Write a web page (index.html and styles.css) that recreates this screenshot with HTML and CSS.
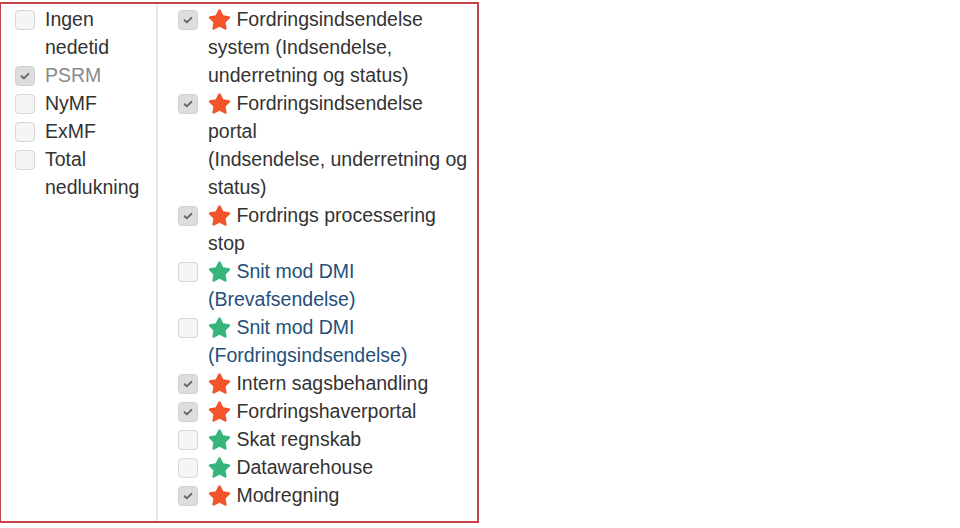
FILE: index.html
```html
<!DOCTYPE html>
<html>
<head>
<meta charset="utf-8">
<link rel="stylesheet" href="styles.css">
</head>
<body>
<div class="panel">
  <div class="col-left">
    <div class="item"><span class="cb"></span><span class="txt">Ingen nedetid</span></div>
    <div class="item"><span class="cb on"><svg viewBox="0 0 12 12"><path d="M2.6 6.2l2.3 2.2 4.5-4.6" /></svg></span><span class="txt muted">PSRM</span></div>
    <div class="item"><span class="cb"></span><span class="txt">NyMF</span></div>
    <div class="item"><span class="cb"></span><span class="txt">ExMF</span></div>
    <div class="item"><span class="cb"></span><span class="txt">Total nedlukning</span></div>
  </div>
  <div class="col-right">
    <div class="item"><span class="cb on"><svg viewBox="0 0 12 12"><path d="M2.6 6.2l2.3 2.2 4.5-4.6" /></svg></span><span class="txt"><svg class="star red" viewBox="0 0 576 512"><path d="M259.3 17.8L194 150.2 47.9 171.5c-26.2 3.8-36.7 36.1-17.7 54.6l105.7 103-25 145.5c-4.5 26.3 23.2 46 46.4 33.7L288 439.6l130.7 68.7c23.2 12.2 50.9-7.4 46.4-33.7l-25-145.5 105.7-103c19-18.5 8.5-50.8-17.7-54.6L382 150.2 316.7 17.8c-11.7-23.6-45.6-23.9-57.4 0z"/></svg> Fordringsindsendelse system (Indsendelse, underretning og status)</span></div>
    <div class="item"><span class="cb on"><svg viewBox="0 0 12 12"><path d="M2.6 6.2l2.3 2.2 4.5-4.6" /></svg></span><span class="txt"><svg class="star red" viewBox="0 0 576 512"><path d="M259.3 17.8L194 150.2 47.9 171.5c-26.2 3.8-36.7 36.1-17.7 54.6l105.7 103-25 145.5c-4.5 26.3 23.2 46 46.4 33.7L288 439.6l130.7 68.7c23.2 12.2 50.9-7.4 46.4-33.7l-25-145.5 105.7-103c19-18.5 8.5-50.8-17.7-54.6L382 150.2 316.7 17.8c-11.7-23.6-45.6-23.9-57.4 0z"/></svg> Fordringsindsendelse portal<br>(Indsendelse, underretning og status)</span></div>
    <div class="item"><span class="cb on"><svg viewBox="0 0 12 12"><path d="M2.6 6.2l2.3 2.2 4.5-4.6" /></svg></span><span class="txt"><svg class="star red" viewBox="0 0 576 512"><path d="M259.3 17.8L194 150.2 47.9 171.5c-26.2 3.8-36.7 36.1-17.7 54.6l105.7 103-25 145.5c-4.5 26.3 23.2 46 46.4 33.7L288 439.6l130.7 68.7c23.2 12.2 50.9-7.4 46.4-33.7l-25-145.5 105.7-103c19-18.5 8.5-50.8-17.7-54.6L382 150.2 316.7 17.8c-11.7-23.6-45.6-23.9-57.4 0z"/></svg> Fordrings processering stop</span></div>
    <div class="item"><span class="cb"></span><span class="txt link"><svg class="star green" viewBox="0 0 576 512"><path d="M259.3 17.8L194 150.2 47.9 171.5c-26.2 3.8-36.7 36.1-17.7 54.6l105.7 103-25 145.5c-4.5 26.3 23.2 46 46.4 33.7L288 439.6l130.7 68.7c23.2 12.2 50.9-7.4 46.4-33.7l-25-145.5 105.7-103c19-18.5 8.5-50.8-17.7-54.6L382 150.2 316.7 17.8c-11.7-23.6-45.6-23.9-57.4 0z"/></svg> Snit mod DMI (Brevafsendelse)</span></div>
    <div class="item"><span class="cb"></span><span class="txt link"><svg class="star green" viewBox="0 0 576 512"><path d="M259.3 17.8L194 150.2 47.9 171.5c-26.2 3.8-36.7 36.1-17.7 54.6l105.7 103-25 145.5c-4.5 26.3 23.2 46 46.4 33.7L288 439.6l130.7 68.7c23.2 12.2 50.9-7.4 46.4-33.7l-25-145.5 105.7-103c19-18.5 8.5-50.8-17.7-54.6L382 150.2 316.7 17.8c-11.7-23.6-45.6-23.9-57.4 0z"/></svg> Snit mod DMI (Fordringsindsendelse)</span></div>
    <div class="item"><span class="cb on"><svg viewBox="0 0 12 12"><path d="M2.6 6.2l2.3 2.2 4.5-4.6" /></svg></span><span class="txt"><svg class="star red" viewBox="0 0 576 512"><path d="M259.3 17.8L194 150.2 47.9 171.5c-26.2 3.8-36.7 36.1-17.7 54.6l105.7 103-25 145.5c-4.5 26.3 23.2 46 46.4 33.7L288 439.6l130.7 68.7c23.2 12.2 50.9-7.4 46.4-33.7l-25-145.5 105.7-103c19-18.5 8.5-50.8-17.7-54.6L382 150.2 316.7 17.8c-11.7-23.6-45.6-23.9-57.4 0z"/></svg> Intern sagsbehandling</span></div>
    <div class="item"><span class="cb on"><svg viewBox="0 0 12 12"><path d="M2.6 6.2l2.3 2.2 4.5-4.6" /></svg></span><span class="txt"><svg class="star red" viewBox="0 0 576 512"><path d="M259.3 17.8L194 150.2 47.9 171.5c-26.2 3.8-36.7 36.1-17.7 54.6l105.7 103-25 145.5c-4.5 26.3 23.2 46 46.4 33.7L288 439.6l130.7 68.7c23.2 12.2 50.9-7.4 46.4-33.7l-25-145.5 105.7-103c19-18.5 8.5-50.8-17.7-54.6L382 150.2 316.7 17.8c-11.7-23.6-45.6-23.9-57.4 0z"/></svg> Fordringshaverportal</span></div>
    <div class="item"><span class="cb"></span><span class="txt"><svg class="star green" viewBox="0 0 576 512"><path d="M259.3 17.8L194 150.2 47.9 171.5c-26.2 3.8-36.7 36.1-17.7 54.6l105.7 103-25 145.5c-4.5 26.3 23.2 46 46.4 33.7L288 439.6l130.7 68.7c23.2 12.2 50.9-7.4 46.4-33.7l-25-145.5 105.7-103c19-18.5 8.5-50.8-17.7-54.6L382 150.2 316.7 17.8c-11.7-23.6-45.6-23.9-57.4 0z"/></svg> Skat regnskab</span></div>
    <div class="item"><span class="cb"></span><span class="txt"><svg class="star green" viewBox="0 0 576 512"><path d="M259.3 17.8L194 150.2 47.9 171.5c-26.2 3.8-36.7 36.1-17.7 54.6l105.7 103-25 145.5c-4.5 26.3 23.2 46 46.4 33.7L288 439.6l130.7 68.7c23.2 12.2 50.9-7.4 46.4-33.7l-25-145.5 105.7-103c19-18.5 8.5-50.8-17.7-54.6L382 150.2 316.7 17.8c-11.7-23.6-45.6-23.9-57.4 0z"/></svg> Datawarehouse</span></div>
    <div class="item"><span class="cb on"><svg viewBox="0 0 12 12"><path d="M2.6 6.2l2.3 2.2 4.5-4.6" /></svg></span><span class="txt"><svg class="star red" viewBox="0 0 576 512"><path d="M259.3 17.8L194 150.2 47.9 171.5c-26.2 3.8-36.7 36.1-17.7 54.6l105.7 103-25 145.5c-4.5 26.3 23.2 46 46.4 33.7L288 439.6l130.7 68.7c23.2 12.2 50.9-7.4 46.4-33.7l-25-145.5 105.7-103c19-18.5 8.5-50.8-17.7-54.6L382 150.2 316.7 17.8c-11.7-23.6-45.6-23.9-57.4 0z"/></svg> Modregning</span></div>
  </div>
</div>
</body>
</html>
```
FILE: styles.css
```css
html, body {
  margin: 0;
  padding: 0;
  background: #fff;
}
body {
  font-family: "Liberation Sans", Arial, sans-serif;
  font-size: 19.5px;
  line-height: 28px;
  color: #333;
}
.panel {
  display: flex;
  width: 476px;
  height: 517px;
  margin-top: 2px;
  border: 2px solid #c4434b;
  border-left-width: 1px;
}
.col-left {
  width: 139px;
  padding: 1px 2px 0 14px;
  border-right: 2px solid #e6e6e6;
  flex: none;
}
.col-right {
  flex: 1;
  padding: 1px 2px 0 20px;
}
.item {
  display: flex;
  align-items: flex-start;
}
.cb {
  flex: none;
  box-sizing: border-box;
  width: 20px;
  height: 20px;
  margin-top: 5px;
  border: 1px solid #d6d6d6;
  border-radius: 4px;
  background: #f5f5f5;
  display: flex;
  align-items: center;
  justify-content: center;
}
.cb.on {
  background: #dddddd;
  border-color: #d0d0d0;
}
.cb svg {
  width: 12px;
  height: 12px;
  fill: none;
  stroke: #666;
  stroke-width: 1.9;
  stroke-linecap: round;
  stroke-linejoin: round;
}
.col-left .txt {
  margin-left: 10px;
}
.col-right .txt {
  margin-left: 10px;
}
.txt.muted {
  color: #8a8a8a;
}
.txt.link {
  color: #23507a;
}
.star {
  width: 23px;
  height: 21px;
  vertical-align: -4px;
}
.star.red { fill: #f4542a; }
.star.green { fill: #34b57b; }
```
